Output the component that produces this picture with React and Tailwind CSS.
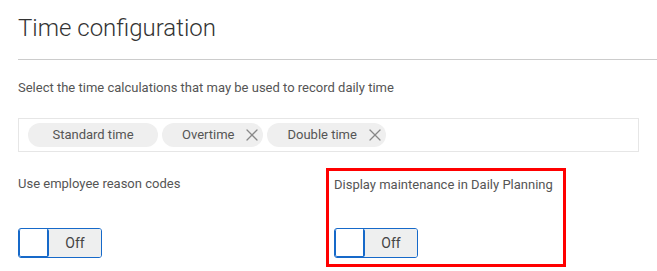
import { X } from 'lucide-react'

function Chip({ label, removable }) {
  return (
    <span
      className={`flex items-center h-[24px] rounded-full bg-[#efefef] text-[13px] text-[#555] ${
        removable ? 'pl-[20px] pr-[1px]' : 'w-[130px] justify-center'
      }`}
    >
      {label}
      {removable && <X className="ml-[8px] w-[20px] h-[20px] text-[#888]" strokeWidth={1.5} />}
    </span>
  )
}

function Toggle() {
  return (
    <div className="flex w-[84px] h-[30px] rounded-[3px] border border-[#1669c9] overflow-hidden">
      <div className="w-[30px] bg-white border-l border-r-2 border-b border-[#1669c9] rounded-[2px]" />
      <div className="flex-1 flex items-center justify-center bg-[#eeefef] text-[14px] text-[#444]">
        Off
      </div>
    </div>
  )
}

export default function App() {
  return (
    <div className="w-[657px] h-[271px] bg-white pl-[18px] font-['Roboto',sans-serif] overflow-hidden">
      <h1 className="pt-[12px] text-[24px] leading-[32px] text-[#333] font-light">Time configuration</h1>
      <div className="mt-[15px] h-px bg-[#cccccc]" />
      <p className="mt-[20px] text-[13px] leading-[16px] text-[#555]">
        Select the time calculations that may be used to record daily time
      </p>
      <div className="mt-[22px] mr-[18px] h-[34px] border border-[#e6e6e6] flex items-center gap-[4px] pl-[9px]">
        <Chip label="Standard time" />
        <Chip label="Overtime" removable />
        <Chip label="Double time" removable />
      </div>
      <div className="flex mt-[16px]">
        <div className="w-[308px] pt-[8px]">
          <p className="text-[13px] leading-[16px] text-[#555]">Use employee reason codes</p>
          <div className="mt-[36px]">
            <Toggle />
          </div>
        </div>
        <div className="w-[240px] h-[99px] border-[3px] border-[#f00] pl-[5px] pt-[6px]">
          <p className="text-[13px] leading-[16px] text-[#555]">Display maintenance in Daily Planning</p>
          <div className="mt-[35px]">
            <Toggle />
          </div>
        </div>
      </div>
    </div>
  )
}
